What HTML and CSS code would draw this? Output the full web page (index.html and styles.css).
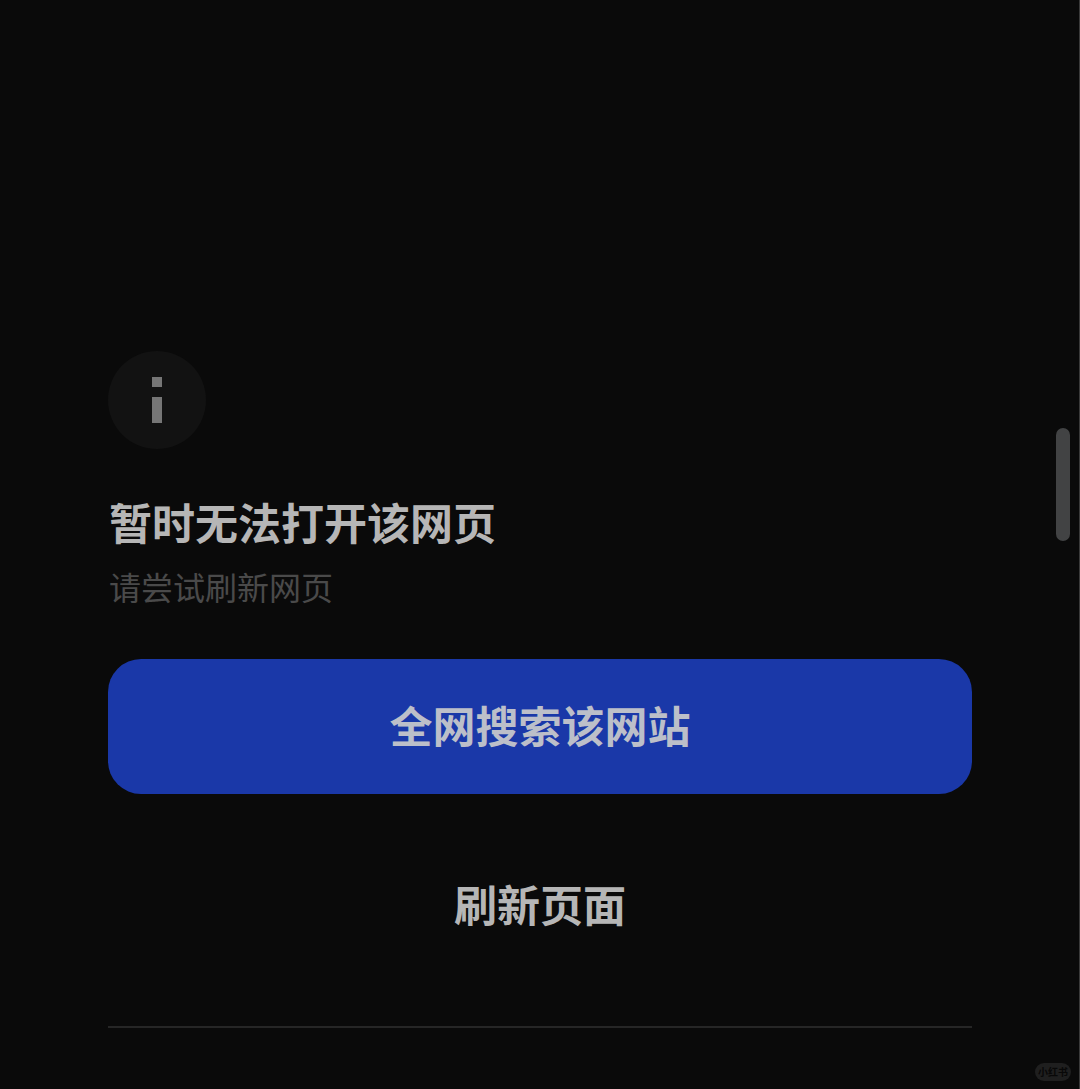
FILE: index.html
```
<!DOCTYPE html>
<html lang="zh-CN">
<head>
<meta charset="utf-8">
<title>暂时无法打开该网页</title>
<link rel="stylesheet" href="styles.css">
</head>
<body>
<main class="page">
  <div class="info-icon">
    <svg width="12" height="46" viewBox="0 0 12 46" aria-hidden="true"><rect x="1" y="0" width="10" height="10" fill="#767676"/><rect x="1" y="20" width="10" height="26" fill="#767676"/></svg>
  </div>
  <h1 class="title">暂时无法打开该网页</h1>
  <p class="subtitle">请尝试刷新网页</p>
  <button class="primary">全网搜索该网站</button>
  <button class="secondary">刷新页面</button>
  <hr class="divider">
</main>
<div class="scrollbar"></div>
<div class="watermark">小红书</div>
</body>
</html>
```
FILE: styles.css
```
* { box-sizing: border-box; }
html, body { margin: 0; height: 100%; background: #0a0a0a; overflow: hidden; }
body { position: relative; font-family: "Noto Sans CJK SC", "Noto Sans", sans-serif; border-right: 1px solid #3a3a3a; }
.page { padding: 351px 107px 0 108px; display: flex; flex-direction: column; }
.info-icon { width: 98px; height: 98px; border-radius: 50%; background: #121212; display: flex; align-items: center; justify-content: center; }
.title { margin: 45px 0 0 1px; font-size: 43px; line-height: 54px; font-weight: 700; color: #b6b6b6; white-space: nowrap; }
.subtitle { margin: 15px 0 0 1px; font-size: 32px; line-height: 46px; font-weight: 400; color: #4a4a4a; }
.primary, .secondary { font-family: inherit; font-size: 43px; font-weight: 700; border: 0; width: 100%; }
.primary { margin-top: 50px; height: 135px; padding: 0 0 5px; border-radius: 33px; background: #1a38a8; color: #bcbfc9; }
.secondary { margin-top: 44px; height: 134px; padding: 0 0 5px; background: transparent; color: #b6b6b6; }
.divider { margin: 54px 0 0; border: 0; height: 2px; background: #262626; }
.scrollbar { position: absolute; left: 1056px; top: 428px; width: 14px; height: 113px; border-radius: 7px; background: #424344; }
.watermark { position: absolute; left: 1035px; top: 1063px; width: 36px; height: 18px; border-radius: 9px; background: #1f1f1f; color: #080808; font-size: 10px; line-height: 18px; text-align: center; font-weight: 700; white-space: nowrap; }
```
